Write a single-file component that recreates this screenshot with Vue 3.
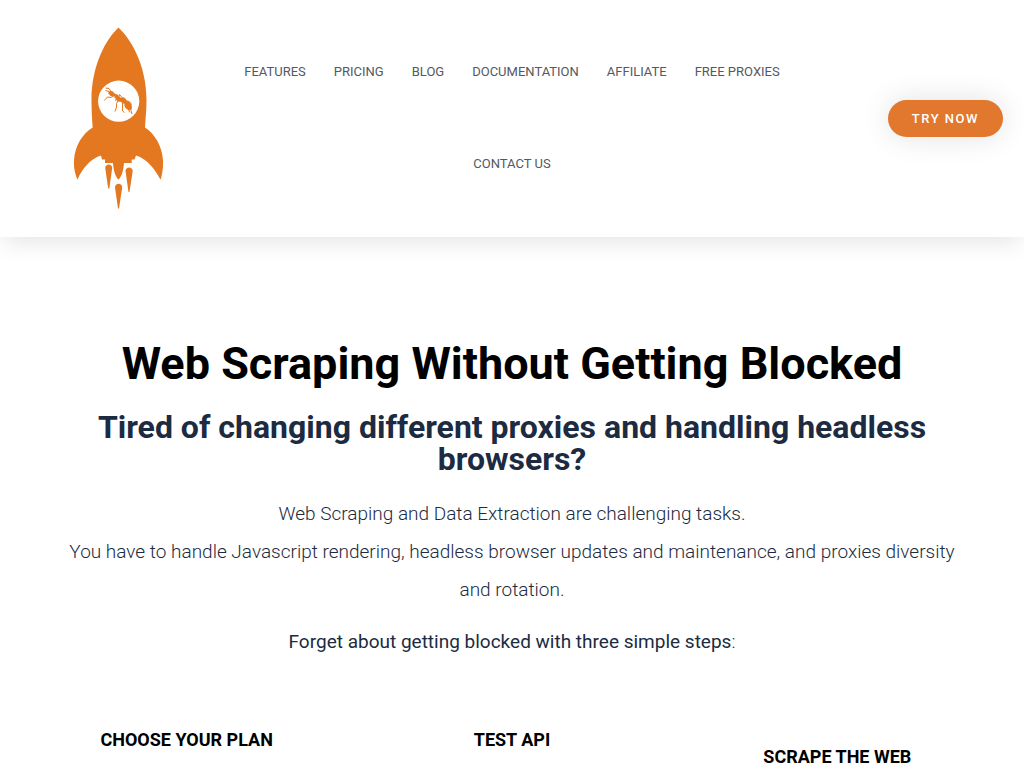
<script setup>
const links = ['Features', 'Pricing', 'Blog', 'Documentation', 'Affiliate', 'Free proxies', 'Contact us']
const steps = ['Choose your plan', 'Test API', 'Scrape the web']
</script>

<template>
  <div class="page">
    <header class="header">
      <a class="logo" href="#" aria-label="Home">
        <svg viewBox="74 27 89 182" aria-hidden="true">
          <g fill="#e37820">
            <path d="M118.500 27.500C107 38 91.500 64 91.500 100C91.500 110 92 119 92.700 127.500C82 134 74 147 73.900 163C74 169 75 174 77.400 179.700C82 169 90 159 101 155.500L102 159.500H105V163H113C113.500 170 115 176 118.500 179.700C122 176 123.500 170 124 163H131.700V159.500H134.500L136 155.500C147 159 155 169 160.500 179.700C162 175 163 170 163.100 163C163 147 155 134 145 127.500C145.500 119 146.500 110 146.500 100C146.500 64 130 38 118.500 27.500Z" />
            <path d="M105.200 168C105.200 163.300 112.200 163.300 112.200 168L109.300 188.500H108.200Z" />
            <path d="M125.500 171C125.500 166.300 132.700 166.300 132.700 171L129.500 192H128.500Z" />
            <path d="M115 187.500C115 182.500 122.200 182.500 122.200 187.500L119 208.500H118Z" />
          </g>
          <circle cx="118.700" cy="101.200" r="20.600" fill="#fff" />
          <g fill="#e37820">
            <path d="M108 93L110 90.800L113 91.500L115 94L113.500 96.800L110.500 96Z" />
            <path d="M113.500 93.500L117.500 94.500L120.500 97.500L122.500 98.500L122 102L118 101.500L114.500 97.500Z" />
            <ellipse cx="123.700" cy="100.500" rx="2.500" ry="3.500" transform="rotate(-35 123.700 100.500)" />
            <path d="M125 101.500C128 99.500 131.700 103 131.700 107C131.700 110 129.700 111 127.700 109.500C125 108.500 123.500 105 125 101.500Z" />
          </g>
          <g fill="none" stroke="#e37820" stroke-width="1" stroke-linejoin="round">
            <path d="M111 91.500L109 88.500L105.500 88M109 91.500L105.500 90.500M113.500 95.500L111 97.500L107.500 97L104.300 100.500M116.500 98.500L115.500 101M119 99L116.500 103.500L116.500 107L115 111.500M122 100L122.500 104L122.500 111L124.500 112.500M119 96.500L119.500 94.500L122.500 98M126 101L128.500 101L131 103.500L131 110.500L132 114M127.500 108L130 112.500" />
          </g>
        </svg>
      </a>
      <nav class="nav" aria-label="Main">
        <a v-for="link in links" :key="link" href="#">{{ link }}</a>
      </nav>
      <div class="action">
        <button type="button">Try now</button>
      </div>
    </header>

    <main class="main">
      <h1>Web Scraping Without Getting Blocked</h1>
      <h2>Tired of changing different proxies and handling headless browsers?</h2>
      <p>
        Web Scraping and Data Extraction are challenging tasks.<br />
        You have to handle Javascript rendering, headless browser updates and maintenance, and
        proxies diversity and rotation.
      </p>
      <p><strong>Forget about getting blocked with three simple steps</strong>:</p>
      <section class="steps">
        <h3 v-for="step in steps" :key="step">{{ step }}</h3>
      </section>
    </main>
  </div>
</template>

<style>
body {
  margin: 0;
  background: #fff;
}
</style>

<style scoped>
.page {
  font-family: Roboto, "Liberation Sans", sans-serif;
  color: #1c2b41;
}
.header {
  display: grid;
  grid-template-columns: 22% 56% 22%;
  align-items: center;
  padding: 26px 0 27px;
  box-shadow: 0 9px 22px -4px rgba(0, 0, 0, 0.11);
}
.logo {
  display: flex;
  justify-content: center;
  padding-left: 12px;
}
.logo svg {
  display: block;
  width: 89px;
  height: 182px;
}
.nav {
  display: flex;
  flex-wrap: wrap;
  justify-content: center;
}
.nav a {
  padding: 0 14px;
  font-size: 13px;
  line-height: 92px;
  color: #54595f;
  text-transform: uppercase;
  text-decoration: none;
}
.action {
  display: flex;
  justify-content: flex-end;
  padding-right: 21px;
}
.action button {
  padding: 11px 24px;
  border: 0;
  border-radius: 20px;
  background: #e2772e;
  box-shadow: 0 0 30px rgba(0, 0, 0, 0.12);
  color: #fff;
  font-family: inherit;
  font-size: 13px;
  font-weight: 500;
  line-height: 15px;
  letter-spacing: 1.5px;
  text-transform: uppercase;
}
.main {
  padding: 104px 24px 0;
  text-align: center;
}
h1,
h2,
h3,
p {
  margin: 0;
}
h1 {
  font-size: 45px;
  line-height: 45px;
  color: #000;
}
h2 {
  margin: 25px 24px 0;
  font-size: 32px;
  line-height: 32px;
}
p {
  margin: 20px 40px 0;
  font-size: 19px;
  font-weight: 300;
  line-height: 38px;
}
p + p {
  margin-top: 14px;
}
strong {
  font-weight: 400;
}
.steps {
  display: grid;
  grid-template-columns: repeat(3, 1fr);
  margin-top: 70px;
}
h3 {
  font-size: 18px;
  line-height: 18px;
  color: #000;
  text-transform: uppercase;
}
h3:last-child {
  padding-top: 17px;
}
</style>
